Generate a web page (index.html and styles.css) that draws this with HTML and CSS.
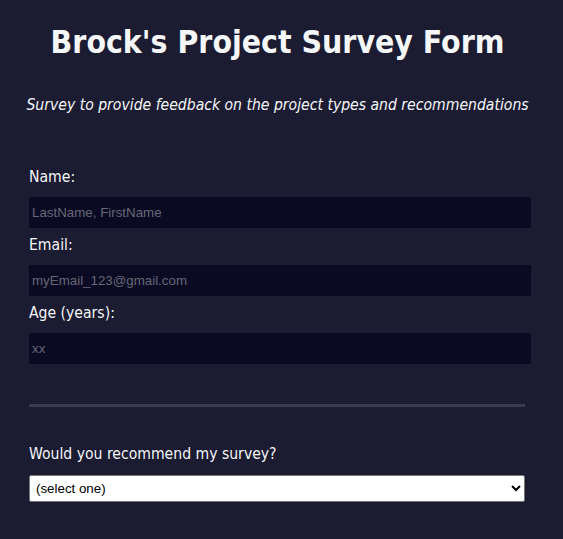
FILE: index.html
```html
<!DOCTYPE html>
<html lang="en">
<head>
<meta charset="utf-8">
<title>Brock's Project Survey Form</title>
<link rel="stylesheet" href="styles.css">
</head>
<body>
  <header class="header">
    <h1 class="title">Brock's Project Survey Form</h1>
    <p class="description">Survey to provide feedback on the project types and recommendations</p>
  </header>
  <form class="form">
    <div class="fields">
      <label class="label" for="name">Name:</label>
      <input class="input" id="name" type="text" placeholder="LastName, FirstName">
      <label class="label" for="email">Email:</label>
      <input class="input" id="email" type="email" placeholder="myEmail_123@gmail.com">
      <label class="label" for="age">Age (years):</label>
      <input class="input" id="age" type="number" placeholder="xx">
    </div>
    <hr class="rule">
    <div class="question">
      <label class="label" for="recommend">Would you recommend my survey?</label>
      <select class="select" id="recommend">
        <option>(select one)</option>
        <option>Yes</option>
        <option>No</option>
      </select>
    </div>
  </form>
</body>
</html>
```
FILE: styles.css
```css
* { box-sizing: border-box; }
html, body { margin: 0; padding: 0; }
body {
  background: #1b1b32;
  color: #f5f6f7;
  font-family: Tahoma, "DejaVu Sans Condensed", "DejaVu Sans", sans-serif;
  font-size: 16px;
  min-height: 539px;
}
.header { text-align: center; padding-top: 22px; padding-right: 8px; }
.title {
  margin: 0;
  font-size: 31.7px;
  line-height: 40px;
  font-weight: bold;
}
.description {
  margin: 33px 0 0;
  font-style: italic;
  font-size: 15.6px;
  line-height: 20px;
}
.form {
  width: 502px;
  margin-left: 29px;
  padding-top: 52px;
}
.fields { display: flex; flex-direction: column; }
.label { display: block; line-height: 20px; font-size: 15.6px; }
.fields .label { margin-bottom: 10px; }
.input {
  display: block;
  width: 502px;
  height: 31px;
  margin: 0 0 7px;
  padding: 0 3px;
  border: none;
  background: #0a0a23;
  color: #f5f6f7;
  font-family: "Liberation Sans", Arial, sans-serif;
  font-size: 13.33px;
  outline: none;
}
.input::placeholder { color: #676775; }
.input::-webkit-outer-spin-button, .input::-webkit-inner-spin-button { -webkit-appearance: none; margin: 0; }
.rule {
  width: 496px;
  height: 3px;
  margin: 33px 0 0;
  border: none;
  background: #3b3b4f;
}
.question { padding-top: 37px; }
.question .label { margin-bottom: 11px; }
.select {
  display: block;
  width: 496px;
  height: 27px;
  font-family: "Liberation Sans", Arial, sans-serif;
  font-size: 13.33px;
  color: #000;
  background: #fff;
  border: 1px solid #767676;
  border-radius: 2px;
  padding: 0 2px;
}
```
